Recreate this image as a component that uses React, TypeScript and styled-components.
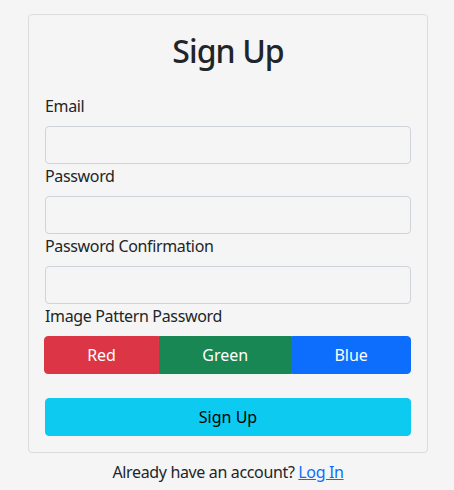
import React from "react";
import styled, { createGlobalStyle } from "styled-components";

const Global = createGlobalStyle`
  html, body { margin: 0; padding: 0; background: #f5f5f5; }
  body { font-family: "Noto Sans", "Open Sans", sans-serif; color: #212529; font-size: 16px; line-height: 1.5; letter-spacing: -0.35px; }
  * { box-sizing: border-box; }
`;

const Page = styled.div`
  padding: 14px 26px 0 28px;
  display: flex;
  flex-direction: column;
  align-items: center;
`;

const Card = styled.form`
  width: 400px;
  border: 1px solid #dcdcdc;
  border-radius: 4px;
  padding: 16px;
  display: flex;
  flex-direction: column;
  background: #f5f5f5;
`;

const Title = styled.h1`
  margin: 1px 0 24px;
  font-size: 32px;
  font-weight: 500;
  line-height: 38px;
  letter-spacing: -0.9px;
  text-align: center;
`;

const Label = styled.label`
  display: block;
  margin-bottom: 8px;
  line-height: 24px;
`;

const Input = styled.input`
  display: block;
  width: 100%;
  height: 38px;
  padding: 6px 12px;
  border: 1px solid #ced4da;
  border-radius: 4px;
  background: #f5f5f5;
  font: inherit;
`;

const Group = styled.div`
  display: flex;
  width: calc(100% + 1px);
  margin-left: -1px;
`;

const GroupButton = styled.button<{ $bg: string }>`
  flex: 1 1 auto;
  height: 38px;
  padding: 6px 12px;
  border: 1px solid ${(p) => p.$bg};
  background: ${(p) => p.$bg};
  color: #fff;
  font: inherit;
  border-radius: 0;
  &:first-child { border-radius: 4px 0 0 4px; }
  &:last-child { border-radius: 0 4px 4px 0; }
`;

const Submit = styled.button`
  margin-top: 24px;
  width: 100%;
  height: 38px;
  border: 1px solid #0dcaf0;
  background: #0dcaf0;
  color: #000;
  border-radius: 4px;
  font: inherit;
`;

const Footer = styled.p`
  margin: 7px 0 0;
  text-align: center;
`;

const Link = styled.a`
  color: #0d6efd;
  text-decoration: underline;
`;

export default function App() {
  return (
    <>
      <Global />
      <Page>
        <Card onSubmit={(e) => e.preventDefault()}>
          <Title>Sign Up</Title>
          <Label>Email</Label>
          <Input type="email" />
          <Label>Password</Label>
          <Input type="password" />
          <Label>Password Confirmation</Label>
          <Input type="password" />
          <Label>Image Pattern Password</Label>
          <Group>
            <GroupButton type="button" $bg="#dc3545">Red</GroupButton>
            <GroupButton type="button" $bg="#198754">Green</GroupButton>
            <GroupButton type="button" $bg="#0d6efd">Blue</GroupButton>
          </Group>
          <Submit type="submit">Sign Up</Submit>
        </Card>
        <Footer>
          Already have an account? <Link href="#">Log In</Link>
        </Footer>
      </Page>
    </>
  );
}
